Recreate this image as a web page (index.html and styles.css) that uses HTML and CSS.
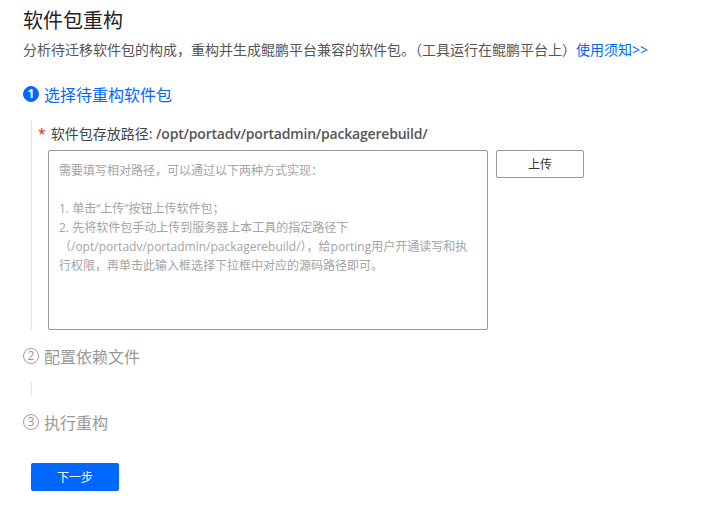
FILE: index.html
```html
<!DOCTYPE html>
<html>
<head>
    <meta charset="utf-8">
    <title>软件包重构</title>
    <link rel="stylesheet" href="styles.css">
</head>
<body>
    <div class="page">
        <h1 class="title">软件包重构</h1>
        <p class="desc">分析待迁移软件包的构成，重构并生成鲲鹏平台兼容的软件包。（工具运行在鲲鹏平台上）<a class="link">使用须知&gt;&gt;</a></p>

        <div class="step active">
            <div class="step_head"><span class="num">1</span>选择待重构软件包</div>
            <div class="step_body">
                <div class="field_label"><span class="star">*</span>软件包存放路径: <span class="path">/opt/portadv/portadmin/packagerebuild/</span></div>
                <div class="field_row">
                    <div class="path_box">
                        <p>需要填写相对路径，可以通过以下两种方式实现：</p>
                        <p class="gap">1. 单击“上传”按钮上传软件包；</p>
                        <p>2. 先将软件包手动上传到服务器上本工具的指定路径下（/opt/portadv/portadmin/packagerebuild/），给porting用户开通读写和执行权限，再单击此输入框选择下拉框中对应的源码路径即可。</p>
                    </div>
                    <button class="upload_btn">上传</button>
                </div>
            </div>
        </div>

        <div class="step">
            <div class="step_head"><span class="num">2</span>配置依赖文件</div>
            <div class="step_body short"></div>
        </div>

        <div class="step">
            <div class="step_head"><span class="num">3</span>执行重构</div>
        </div>

        <button class="next_btn">下一步</button>
    </div>
</body>
</html>
```

FILE: styles.css
```css
body {
    margin: 0;
    background-color: #ffffff;
    font-family: "Open Sans", "Noto Sans CJK SC", sans-serif;
    color: #333333;
}
.page {
    padding: 6px 23px 0 23px;
}
.title {
    margin: 0;
    font-size: 20px;
    font-weight: normal;
    line-height: 30px;
    color: #222222;
}
.desc {
    margin: 4px 0 0 0;
    font-size: 14px;
    line-height: 20px;
    color: #555555;
}
.link {
    color: #0067ff;
}

.step {
    margin-top: 14px;
}
.step.active {
    margin-top: 22px;
}
.step_head {
    display: flex;
    align-items: center;
    height: 24px;
    font-size: 16px;
    color: #999999;
}
.step.active .step_head {
    color: #0067ff;
}
.num {
    display: inline-flex;
    align-items: center;
    justify-content: center;
    box-sizing: border-box;
    width: 16px;
    height: 16px;
    margin-right: 5px;
    border: 1px solid #a0a0a0;
    border-radius: 50%;
    font-size: 12px;
    line-height: 1;
    color: #999999;
}
.step.active .num {
    background-color: #0067ff;
    border-color: #0067ff;
    color: #ffffff;
    font-weight: bold;
}
.step_body {
    margin: 14px 0 0 8px;
    border-left: 1px solid #e1e6ee;
    padding: 4px 0 0 6px;
}
.step_body.short {
    height: 14px;
    padding: 0;
}

.field_label {
    font-size: 14px;
    line-height: 20px;
    color: #444444;
}
.path {
    font-weight: 600;
    letter-spacing: -0.2px;
    color: #555555;
}
.star {
    color: #e32020;
    margin-right: 5px;
}
.field_row {
    display: flex;
    align-items: flex-start;
    margin-top: 6px;
    margin-left: 10px;
}
.path_box {
    box-sizing: border-box;
    width: 440px;
    height: 180px;
    padding: 10px 10px;
    border: 1px solid #999999;
    border-radius: 2px;
    font-size: 12px;
    line-height: 19px;
    color: #a4a4a4;
}
.path_box p {
    margin: 0;
}
.path_box .gap {
    margin-top: 19px;
}
.upload_btn {
    box-sizing: border-box;
    width: 88px;
    height: 28px;
    margin-left: 8px;
    background-color: #ffffff;
    border: 1px solid #999999;
    border-radius: 2px;
    font-family: "Open Sans", "Noto Sans CJK SC", sans-serif;
    font-size: 12px;
    color: #333333;
}

.next_btn {
    box-sizing: border-box;
    width: 88px;
    height: 28px;
    margin: 29px 0 0 8px;
    background-color: #0067ff;
    border: none;
    border-radius: 2px;
    font-family: "Open Sans", "Noto Sans CJK SC", sans-serif;
    font-size: 12px;
    color: #ffffff;
}
```
